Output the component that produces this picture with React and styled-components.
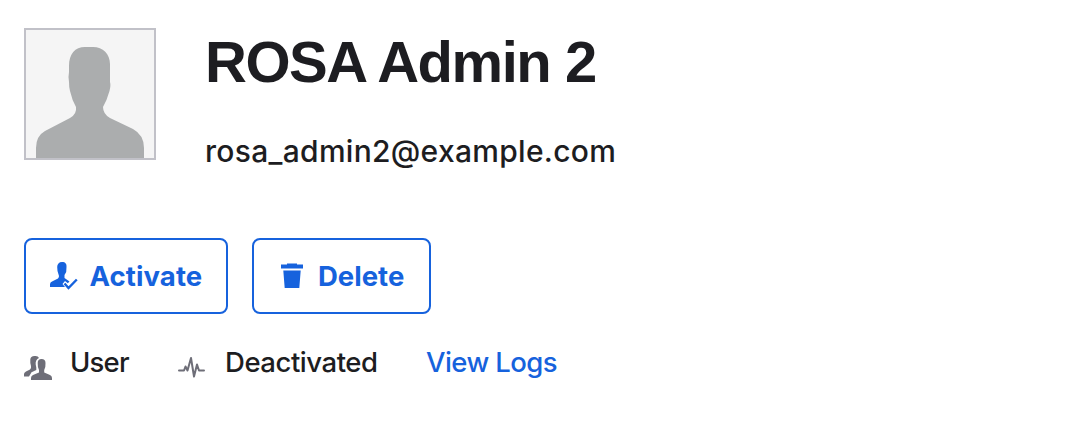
import React from 'react';
import styled, { createGlobalStyle } from 'styled-components';

const GlobalStyle = createGlobalStyle`
  body {
    margin: 0;
    background: #fff;
    color: #1d1d21;
    font-family: Inter, 'Liberation Sans', sans-serif;
  }
`;

const Page = styled.main`
  display: flex;
  flex-direction: column;
  align-items: flex-start;
  padding: 28px 24px;
`;

const Profile = styled.header`
  display: flex;
  gap: 49px;
  height: 210px;
`;

const Avatar = styled.div`
  box-sizing: border-box;
  width: 132px;
  height: 132px;
  border: 2px solid #c1c1c8;
  background: #f5f5f5;

  svg {
    display: block;
  }
`;

const Identity = styled.div`
  display: flex;
  flex-direction: column;
  white-space: nowrap;
`;

const Name = styled.h1`
  margin: 0;
  font-family: 'Liberation Sans', sans-serif;
  font-size: 58px;
  line-height: 68px;
  font-weight: 700;
  letter-spacing: -1.45px;
`;

const Email = styled.p`
  margin: 35px 0 0;
  font-size: 30px;
  line-height: 40px;
  font-weight: 450;
  letter-spacing: 0.3px;
`;

const Actions = styled.div`
  display: flex;
  gap: 24px;
`;

const ActionButton = styled.button`
  box-sizing: border-box;
  display: flex;
  align-items: center;
  width: ${(p) => p.$width};
  height: 76px;
  padding: 0 0 0 ${(p) => p.$inset};
  gap: ${(p) => p.$gap};
  border: 2px solid #1662dd;
  border-radius: 8px;
  background: #fff;
  color: #1662dd;
  font-family: inherit;
  font-size: 27.5px;
  font-weight: 700;
  white-space: nowrap;
`;

const Label = styled.span`
  letter-spacing: ${(p) => p.$tracking || 0};
`;

const Meta = styled.div`
  display: flex;
  align-items: center;
  height: 40px;
  margin-top: 28px;
  font-size: 27.5px;
  font-weight: 450;
  line-height: 40px;
  white-space: nowrap;
`;

const MetaItem = styled.div`
  display: flex;
  align-items: center;
  gap: ${(p) => p.$gap};
  width: ${(p) => p.$width};

  svg {
    flex: none;
    margin-top: 11px;
    color: #6e6e78;
  }
`;

const LogsLink = styled.a`
  color: #1662dd;
  font-weight: 500;
  letter-spacing: -0.58px;
  text-decoration: none;
`;

const AvatarFigure = () => (
  <svg width="128" height="128" viewBox="0 0 128 128" fill="#abadae">
    <path d="M10 128V118Q10 106 19 101L44 88Q51 84 50 77Q46 70 44 61Q43 58 43 52Q42 47 43 42V36C43 24 49 17 59 17H67C77 17 84 24 84 34V52Q85 55 83.500 61Q81 70 77 77Q77 84 84 88L107 99Q118 105 118 118V128Z" />
  </svg>
);

const ActivateIcon = () => (
  <svg width="28" height="28" viewBox="0 0 28 28" fill="currentColor">
    <path d="M12 0C15.500 0 16.800 2 16.500 5L16.200 10L14.500 13V16L19.500 19.500L17.800 21.200L15 19L12.500 22L15 25H0V22Q0 20 3 19L8 16.500Q9 15 9 14L7.500 9L7.200 5C7.200 2 9 0 12 0Z" />
    <path d="M14.500 21.500L18.500 26L26.800 17.500" fill="none" stroke="currentColor" strokeWidth="2.400" />
  </svg>
);

const TrashIcon = () => (
  <svg width="22" height="26" viewBox="0 0 22 26" fill="currentColor">
    <path d="M6 1.500V.5H16V1.500H22V5.500H0V1.500ZM2.300 7.500H19.700L18.300 25H3.700Z" />
  </svg>
);

const UsersIcon = () => (
  <svg width="28" height="28" viewBox="0 0 28 28" fill="currentColor">
    <path d="M10.500 2Q14 1.500 15 4Q11.200 5.500 11.700 10.500L12.300 13.500L12.300 16L7.500 18.300L5 22.500H0V20Q0 18.500 2 17.500L6 15.500Q7.500 14 7 12Q6 9 6.300 5.500Q6.500 2 10.500 2Z" />
    <path d="M17.500 5Q21.500 5 21.500 9Q21.800 13 20.200 16V18.500L26 21Q28 22 28 24V26H7V24Q7 22 9 21L15 18.500V16Q13.500 13 13.700 9Q13.700 5 17.500 5Z" />
  </svg>
);

const PulseIcon = () => (
  <svg width="28" height="28" viewBox="0 0 28 28" fill="none" stroke="currentColor" strokeWidth="2" strokeLinejoin="round" strokeLinecap="round">
    <path d="M2 16.500H7L8.500 12.500L10.500 16.500L14 4L17 22.500L20 10.500L22 16.500H27" />
  </svg>
);

export default function App() {
  return (
    <>
      <GlobalStyle />
      <Page>
        <Profile>
          <Avatar>
            <AvatarFigure />
          </Avatar>
          <Identity>
            <Name>ROSA Admin 2</Name>
            <Email>rosa_admin2@example.com</Email>
          </Identity>
        </Profile>
        <Actions>
          <ActionButton $width="204px" $inset="24px" $gap="11.5px">
            <ActivateIcon />
            <Label $tracking="0.1px">Activate</Label>
          </ActionButton>
          <ActionButton $width="179px" $inset="27px" $gap="15px">
            <TrashIcon />
            <Label>Delete</Label>
          </ActionButton>
        </Actions>
        <Meta>
          <MetaItem $width="153px" $gap="18px">
            <UsersIcon />
            <Label $tracking="-0.8px">User</Label>
          </MetaItem>
          <MetaItem $width="249px" $gap="20px">
            <PulseIcon />
            <Label $tracking="-0.45px">Deactivated</Label>
          </MetaItem>
          <LogsLink href="#">View Logs</LogsLink>
        </Meta>
      </Page>
    </>
  );
}
